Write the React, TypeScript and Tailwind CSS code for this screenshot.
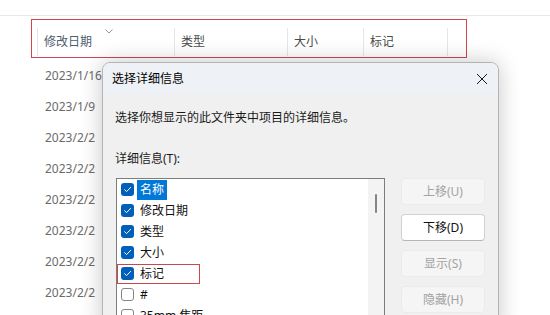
const dates = ['2023/1/16', '2023/1/9', '2023/2/2', '2023/2/2', '2023/2/2', '2023/2/2', '2023/2/2', '2023/2/2']

const columns = [
  { label: '修改日期', width: 'w-[137px]', color: 'text-[#4f5d6d]' },
  { label: '类型', width: 'w-[113px]', color: 'text-[#4a4a4a]' },
  { label: '大小', width: 'w-[76px]', color: 'text-[#4a4a4a]' },
  { label: '标记', width: 'w-[85px]', color: 'text-[#4a4a4a]' },
]

const items = [
  { label: '名称', checked: true, selected: true },
  { label: '修改日期', checked: true },
  { label: '类型', checked: true },
  { label: '大小', checked: true },
  { label: '标记', checked: true, marked: true },
  { label: '#', checked: false },
  { label: '35mm 焦距', checked: false },
]

const buttons = [
  { label: '上移(U)', enabled: false },
  { label: '下移(D)', enabled: true },
  { label: '显示(S)', enabled: false },
  { label: '隐藏(H)', enabled: false },
]

function CheckBox({ checked }: { checked: boolean }) {
  if (!checked) {
    return <span className="w-[13px] h-[13px] shrink-0 rounded-[3px] border border-[#858585] bg-white" />
  }
  return (
    <span className="w-[13px] h-[13px] shrink-0 rounded-[3px] bg-[#005fb8] flex items-center justify-center">
      <svg width="13" height="13" viewBox="0 0 13 13" fill="none">
        <path d="M3.6 6.7 L5.6 8.6 L9.6 4.4" stroke="white" strokeWidth="1" strokeLinecap="round" strokeLinejoin="round" />
      </svg>
    </span>
  )
}

export default function App() {
  return (
    <div
      className="relative w-[550px] h-[315px] overflow-hidden bg-white"
      style={{ fontFamily: '"Noto Sans", "Noto Sans CJK SC", sans-serif' }}
    >
      {/* top strip */}
      <div className="h-[16px] border-b border-[#e8e8e8]" />

      {/* column header, boxed in red */}
      <div className="ml-[31px] mt-[3px] w-[436px] h-[39px] border border-[#d0464c] pl-[5px] pt-[8px]">
        <div className="flex h-[28px]">
          {columns.map((col, i) => (
            <div
              key={col.label}
              className={`relative ${col.width} h-full flex items-center pl-[6px] border-l border-[#e6e6e6] ${
                i === columns.length - 1 ? 'border-r' : ''
              } text-[12px] leading-none ${col.color}`}
            >
              {col.label}
              {i === 0 && (
                <svg className="absolute left-[67px] top-[1px]" width="8" height="5" viewBox="0 0 8 5" fill="none">
                  <path d="M0.5 0.5 L4 4 L7.5 0.5" stroke="#8a8a8a" strokeWidth="0.9" />
                </svg>
              )}
            </div>
          ))}
        </div>
      </div>

      {/* file rows behind the dialog */}
      <div className="pt-[2px]">
        {dates.map((d, i) => (
          <div key={i} className="h-[31px] flex items-center pl-[45px] text-[12px] leading-none text-[#6b6b6b]">
            {d}
          </div>
        ))}
      </div>

      {/* dialog */}
      <div className="absolute left-[102px] top-[62px] w-[397px] h-[275px] rounded-[8px] border border-[#b4b4b4] bg-[#f0f0f0] shadow-[0_0_22px_rgba(0,0,0,0.22)] overflow-hidden">
        <div className="h-[31px] flex items-center justify-between pl-[9px] pr-[10px] bg-[#eef1f5]">
          <span className="text-[12px] leading-none text-black">选择详细信息</span>
          <svg width="12" height="12" viewBox="0 0 12 12" fill="none">
            <path d="M1 1 L11 11 M11 1 L1 11" stroke="#1a1a1a" strokeWidth="1" />
          </svg>
        </div>

        <div className="pl-[12px]">
          <p className="mt-[16px] h-[16px] flex items-center text-[12px] leading-none text-[#1a1a1a]">
            选择你想显示的此文件夹中项目的详细信息。
          </p>
          <p className="mt-[25px] h-[16px] flex items-center text-[12px] leading-none text-[#1a1a1a]">详细信息(T):</p>

          <div className="mt-[11px] flex">
            {/* list */}
            <div className="ml-[1px] w-[269px] h-[150px] border border-[#7d7d7d] bg-white flex">
              <div className="flex-1">
                {items.map((it) => (
                  <div key={it.label} className="relative h-[21px] flex items-center pl-[4px]">
                    <CheckBox checked={it.checked} />
                    <span
                      className={`ml-[3px] h-[20px] px-[3px] flex items-center text-[12px] leading-none ${
                        it.selected ? 'bg-[#0078d7] text-white' : 'text-[#111]'
                      }`}
                    >
                      {it.label}
                    </span>
                    {it.marked && (
                      <span className="absolute left-0 top-[1px] w-[83px] h-[20px] border border-[#c9474d]" />
                    )}
                  </div>
                ))}
              </div>
              <div className="w-[16px] h-full bg-[#f3f3f3] flex justify-center pt-[15px]">
                <div className="w-[2px] h-[19px] rounded-full bg-[#858585]" />
              </div>
            </div>

            {/* side buttons */}
            <div className="ml-[16px] w-[84px] flex flex-col gap-[9px]">
              {buttons.map((b) => (
                <div
                  key={b.label}
                  className={`h-[27px] rounded-[4px] flex items-center justify-center text-[12px] leading-none ${
                    b.enabled
                      ? 'bg-white border border-[#d1d1d1] border-b-[#b5b5b5] text-[#111]'
                      : 'bg-[#f5f5f5] border border-[#ebebeb] text-[#a3a3a3]'
                  }`}
                >
                  {b.label}
                </div>
              ))}
            </div>
          </div>
        </div>
      </div>
    </div>
  )
}
